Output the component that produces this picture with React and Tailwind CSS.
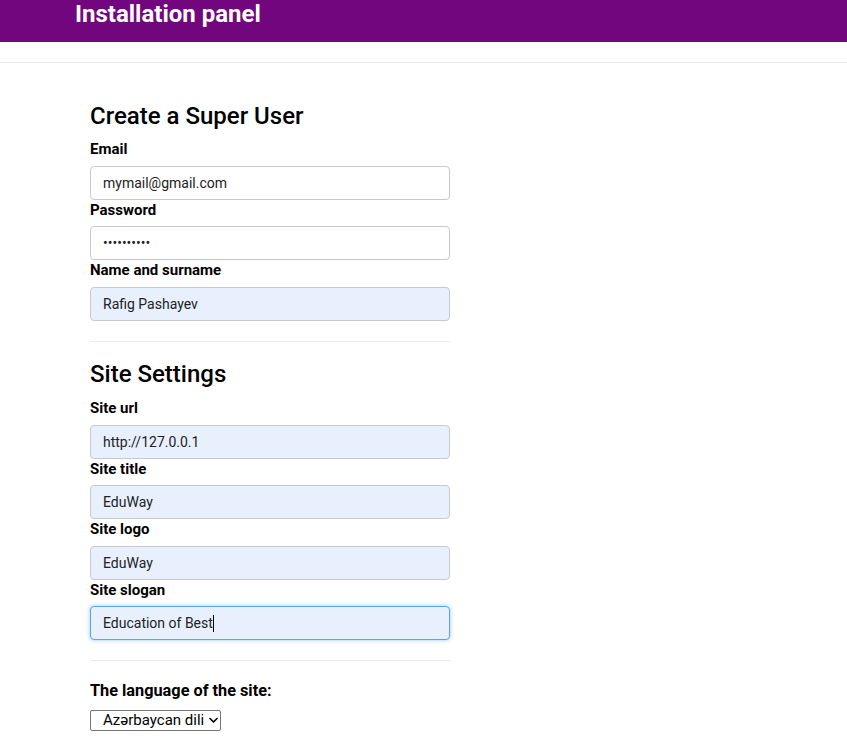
import React from "react";

function Field({ label, value, autofill, type = "text" }) {
  return (
    <div>
      <label className="block text-[15px] font-bold leading-[21px] mb-[5.5px] text-black">{label}</label>
      <input
        type={type}
        readOnly
        value={value}
        className={`block w-full h-[34px] rounded-[4px] border border-[#c9c9c9] px-[12px] text-[14px] text-[#222] outline-none ${autofill ? "bg-[#e8f0fe]" : "bg-white"}`}
        style={{ fontFamily: "Roboto, sans-serif" }}
      />
    </div>
  );
}

export default function App() {
  return (
    <div className="min-h-[738px] bg-white text-black" style={{ fontFamily: "Roboto, 'Liberation Sans', sans-serif" }}>
      <header className="h-[42px] bg-[#72067f] pl-[75px]">
        <h1 className="text-[24px] leading-[28px] font-bold text-white">Installation panel</h1>
      </header>
      <div className="mt-[20px] border-t border-[#ebebeb]" />
      <main className="ml-[90px] w-[360px] pt-[38.5px]">
        <h2 className="text-[24px] leading-[28.8px] font-medium mb-[9px]">Create a Super User</h2>
        <Field label="Email" value="mymail@gmail.com" />
        <Field label="Password" value="1234567890" type="password" />
        <Field label="Name and surname" value="Rafig Pashayev" autofill />
        <div className="mt-[20px] border-t border-[#ebebeb]" />
        <h2 className="mt-[18.5px] text-[24px] leading-[28.8px] font-medium mb-[9px]">Site Settings</h2>
        <Field label="Site url" value="http://127.0.0.1" autofill />
        <Field label="Site title" value="EduWay" autofill />
        <Field label="Site logo" value="EduWay" autofill />
        <div>
          <label className="block text-[15px] font-bold leading-[21px] mb-[5.5px]">Site slogan</label>
          <div className="flex items-center w-full h-[34px] rounded-[4px] border border-[#5ea2ee] bg-[#e8f0fe] px-[12px] text-[14px] text-[#222] shadow-[0_0_4px_rgba(66,153,238,0.55)]">
            <span>Education of Best</span>
            <span className="inline-block w-px h-[17px] bg-black" />
          </div>
        </div>
        <div className="mt-[20px] border-t border-[#ebebeb]" />
        <label className="block mt-[19px] text-[16.3px] font-bold leading-[21px] mb-[7px]">The language of the site:</label>
        <div className="relative inline-block">
          <select
            className="appearance-none block w-[131px] h-[21px] rounded-[2px] border border-[#767676] bg-white pl-[12px] pr-[12px] text-[15px] leading-[19px] text-black outline-none"
            style={{ fontFamily: "Roboto, sans-serif" }}
            defaultValue="az"
          >
            <option value="az">Azərbaycan dili</option>
            <option value="en">English</option>
          </select>
          <svg className="pointer-events-none absolute right-[3px] top-[7px]" width="9" height="7" viewBox="0 0 9 7">
            <path d="M1 1.5 L4.5 5 L8 1.5" fill="none" stroke="#000" strokeWidth="1.6" strokeLinecap="round" strokeLinejoin="round" />
          </svg>
        </div>
      </main>
    </div>
  );
}
